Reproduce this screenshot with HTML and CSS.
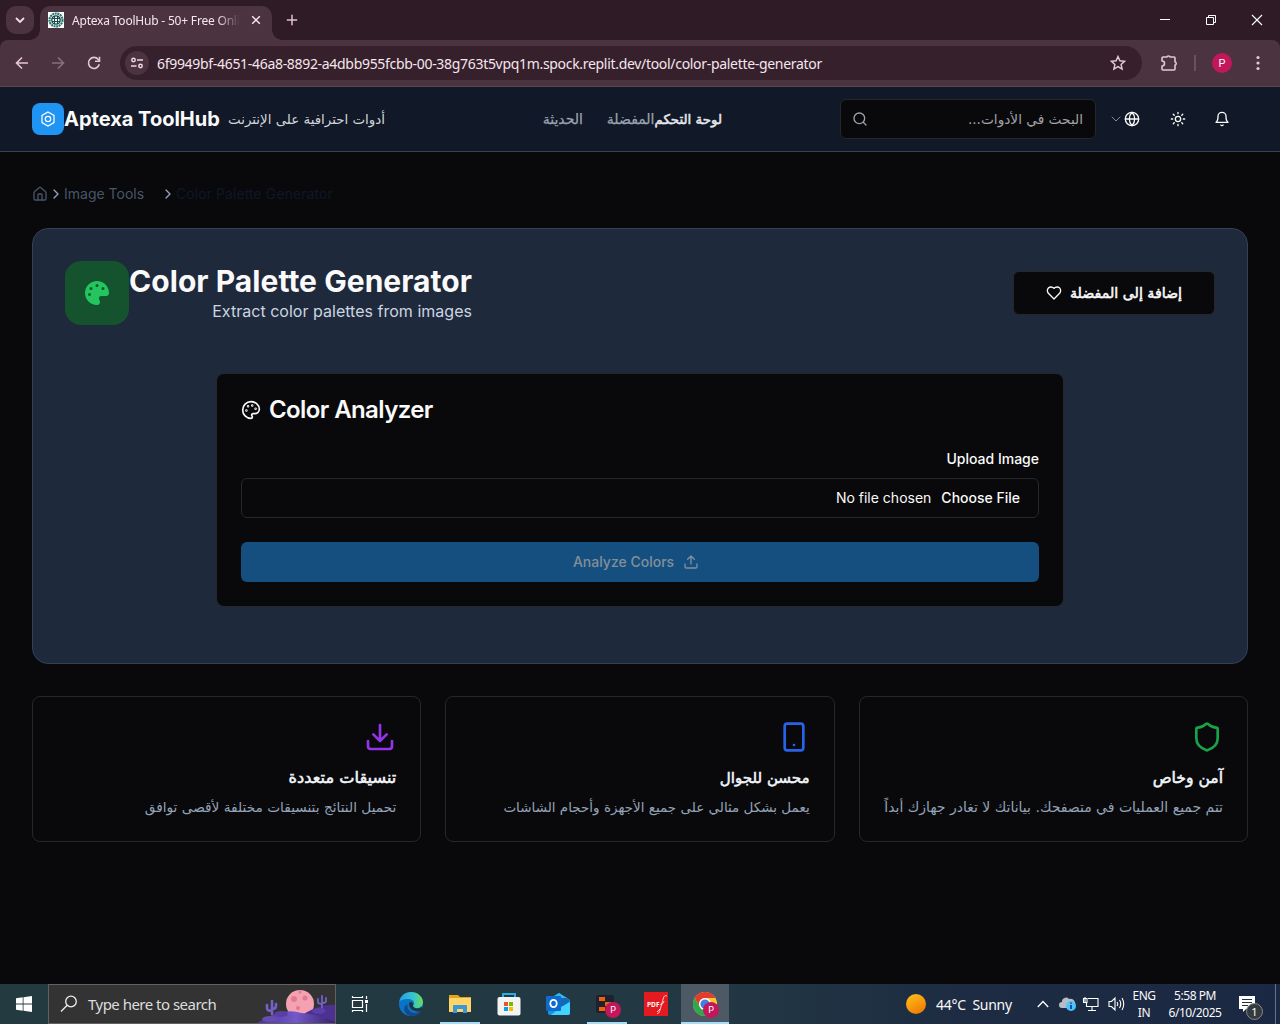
FILE: index.html
```html
<!DOCTYPE html>
<html lang="en">
<head>
<meta charset="utf-8">
<title>Aptexa ToolHub - 50+ Free Online Tools</title>
<link rel="stylesheet" href="styles.css">
</head>
<body>
<div class="tabs">
  <span class="tab-search"><svg width="16" height="16" viewBox="0 0 16 16" fill="none" stroke="#f0dde6" stroke-width="1.8"><path d="M4 6l4 4 4-4"/></svg></span>
  <div class="tab">
    <svg class="favicon" width="16" height="16" viewBox="0 0 16 16"><path fill="#fff" d="M0 0h16v16H0z"/><g fill="none" stroke="#2a7773"><circle cx="8" cy="8" r="6.500" stroke-width="2.200" stroke-dasharray="2 .6"/><circle cx="8" cy="8" r="4.200" stroke="#123e43" stroke-width="1.300"/><path stroke="#174a4d" d="M4 6.500h8M4 9.500h8M6.500 4v8M9.500 4v8"/></g></svg>
    <span class="tab-title">Aptexa ToolHub - 50+ Free Onli</span>
    <svg width="10" height="10" viewBox="0 0 10 10" stroke="#f5e6ed" stroke-width="1.500"><path d="M1.200 1.200l7.600 7.600M8.800 1.200L1.200 8.800"/></svg>
  </div>
  <svg class="new-tab" width="12" height="12" viewBox="0 0 12 12" stroke="#dfc0ce" stroke-width="1.500"><path d="M6 .8v10.400M.8 6h10.400"/></svg>
  <div class="window-buttons">
    <svg width="12" height="12" viewBox="0 0 12 12" stroke="#fff"><path d="M1 5.500h10"/></svg>
    <svg width="12" height="12" viewBox="0 0 12 12" fill="none" stroke="#fff"><path d="M1.500 3.500h7v7h-7zM3.500 3.500v-2h7v7h-2"/></svg>
    <svg width="12" height="12" viewBox="0 0 12 12" stroke="#fff" stroke-width="1.100"><path d="M1 1l10 10M11 1L1 11"/></svg>
  </div>
</div>
<div class="toolbar-wrap">
<div class="toolbar">
  <svg class="tool" width="16" height="16" viewBox="0 0 16 16" fill="none" stroke="#e6c6d4" stroke-width="1.600"><path d="M14 8H3M8 2.500L2.500 8 8 13.500"/></svg>
  <svg class="tool" width="16" height="16" viewBox="0 0 16 16" fill="none" stroke="#8b6f7c" stroke-width="1.600"><path d="M2 8h11M8 2.500L13.500 8 8 13.500"/></svg>
  <svg class="tool" width="16" height="16" viewBox="0 0 16 16" fill="none" stroke="#e6c6d4" stroke-width="1.600"><path d="M13.300 9.300A5.500 5.500 0 1 1 12.300 4.500L13.500 5.800"/><path d="M13.500 1.800v4.500H9"/></svg>
  <div class="address">
    <span class="site-info"><svg width="14" height="14" viewBox="0 0 14 14" fill="none" stroke="#efd5e0" stroke-width="1.500"><circle cx="3.500" cy="4" r="1.700"/><path d="M7 4h6M1 10h5.500"/><circle cx="10.500" cy="10" r="1.700"/></svg></span>
    <span class="url">6f9949bf-4651-46a8-8892-a4dbb955fcbb-00-38g763t5vpq1m.spock.replit.dev/tool/color-palette-generator</span>
    <svg class="star" width="16" height="16" viewBox="0 0 16 16" fill="none" stroke="#e6cdd7" stroke-width="1.400"><path d="M8 1.500l1.900 4.300 4.700.5-3.500 3.100 1 4.600L8 11.600 3.900 14l1-4.600L1.400 6.300l4.700-.5z"/></svg>
  </div>
  <svg class="puzzle" width="18" height="18" viewBox="0 0 18 18" fill="none" stroke="#e6c6d4" stroke-width="1.600"><path d="M3 3h4q0-1 1.500-1T10 3h4q1 0 1 1v4q1.200 0 1.200 1.500T15 11v4q0 1-1 1H3q-1 0-1-1v-3a2.500 2.500 0 0 0 0-5V4q0-1 1-1z" stroke-linejoin="round"/></svg>
  <span class="divider"></span>
  <span class="profile">P</span>
  <svg width="4" height="16" viewBox="0 0 4 16" fill="#e6c6d4"><circle cx="2" cy="2.500" r="1.600"/><circle cx="2" cy="8" r="1.600"/><circle cx="2" cy="13.500" r="1.600"/></svg>
</div>
</div>

<header class="site-header">
  <span class="logo"><svg width="16" height="16" viewBox="0 0 16 16" fill="none" stroke="#fff" stroke-width="1.200"><path d="M8 1l6 3.400v7.200L8 15l-6-3.400V4.400z"/><circle cx="8" cy="8" r="2.700"/></svg></span>
  <span class="brand">Aptexa ToolHub</span>
  <span class="tagline ar" dir="rtl">أدوات احترافية على الإنترنت</span>
  <nav class="nav ar" dir="rtl"><b>لوحة التحكم</b><span>المفضلة</span><span class="recent">الحديثة</span></nav>
  <div class="search ar">
    <svg class="lucide" width="16" height="16" viewBox="0 0 24 24"><circle cx="11" cy="11" r="8"/><path d="m21 21-4.300-4.300"/></svg>
    <span dir="rtl">البحث في الأدوات...</span>
  </div>
  <svg class="lucide chevron" width="12" height="12" viewBox="0 0 24 24"><path d="m4 8 8 8 8-8"/></svg>
  <svg class="lucide" width="16" height="16" viewBox="0 0 24 24"><circle cx="12" cy="12" r="10"/><path d="M12 2a14.500 14.500 0 0 0 0 20 14.500 14.500 0 0 0 0-20M2 12h20"/></svg>
  <svg class="lucide sun" width="16" height="16" viewBox="0 0 24 24"><circle cx="12" cy="12" r="4"/><path d="M12 2v2M12 20v2M4.930 4.930l1.410 1.410M17.660 17.660l1.410 1.410M2 12h2M20 12h2M6.340 17.660l-1.410 1.410M19.070 4.930l-1.410 1.410"/></svg>
  <svg class="lucide bell" width="16" height="16" viewBox="0 0 24 24"><path d="M10.300 21a1.940 1.940 0 0 0 3.400 0M6 8a6 6 0 0 1 12 0c0 7 3 9 3 9H3s3-2 3-9"/></svg>
</header>

<main class="page">
  <div class="crumbs">
    <svg class="lucide home" width="16" height="16" viewBox="0 0 24 24"><path d="M15 21v-8a1 1 0 0 0-1-1h-4a1 1 0 0 0-1 1v8"/><path d="M3 10a2 2 0 0 1 .709-1.528l7-5.999a2 2 0 0 1 2.582 0l7 5.999A2 2 0 0 1 21 10v9a2 2 0 0 1-2 2H5a2 2 0 0 1-2-2z"/></svg>
    <svg class="lucide sep" width="16" height="16" viewBox="0 0 24 24"><path d="m9 18 6-6-6-6"/></svg>
    <span class="parent">Image Tools</span>
    <svg class="lucide sep" width="16" height="16" viewBox="0 0 24 24"><path d="m9 18 6-6-6-6"/></svg>
    <span class="current">Color Palette Generator</span>
  </div>

  <section class="panel">
    <div class="panel-head">
      <span class="tool-icon"><svg width="24" height="24" viewBox="0 0 512 512"><path fill="#22c55e" d="M512 256c0 .9 0 1.800 0 2.700-.4 36.500-33.600 61.300-70.100 61.300H344c-26.500 0-48 21.500-48 48 0 3.400 .4 6.700 1 9.900 2.100 10.200 6.500 20 10.800 29.900 6.100 13.800 12.100 27.500 12.100 42 0 31.800-21.600 60.700-53.400 62-3.500 .1-7 .2-10.600 .2C114.600 512 0 397.400 0 256S114.600 0 256 0 512 114.600 512 256zM128 288a32 32 0 1 0-64 0 32 32 0 1 0 64 0zm0-96a32 32 0 1 0 0-64 32 32 0 1 0 0 64zM288 96a32 32 0 1 0-64 0 32 32 0 1 0 64 0zm96 96a32 32 0 1 0 0-64 32 32 0 1 0 0 64z"/></svg></span>
      <div class="titles"><h1>Color Palette Generator</h1><p>Extract color palettes from images</p></div>
      <div class="favorite"><svg class="lucide" width="16" height="16" viewBox="0 0 24 24"><path d="M19 14c1.490-1.460 3-3.210 3-5.500A5.500 5.500 0 0 0 16.500 3c-1.760 0-3 .5-4.500 2-1.500-1.500-2.740-2-4.500-2A5.500 5.500 0 0 0 2 8.500c0 2.300 1.500 4.050 3 5.500l7 7Z"/></svg><b class="ar" dir="rtl">إضافة إلى المفضلة</b></div>
    </div>
    <div class="analyzer">
      <h2><svg class="lucide" width="20" height="20" viewBox="0 0 24 24"><circle cx="13.500" cy="6.500" r=".5"/><circle cx="17.500" cy="10.500" r=".5"/><circle cx="8.500" cy="7.500" r=".5"/><circle cx="6.500" cy="12.500" r=".5"/><path d="M12 2C6.500 2 2 6.500 2 12s4.500 10 10 10c.926 0 1.648-.746 1.648-1.688 0-.437-.18-.835-.437-1.125-.29-.289-.438-.652-.438-1.125a1.640 1.640 0 0 1 1.668-1.668h1.996c3.051 0 5.555-2.503 5.555-5.554C21.965 6.012 17.461 2 12 2z"/></svg><span>Color Analyzer</span></h2>
      <div class="label">Upload Image</div>
      <div class="file"><span>No file chosen</span><b>Choose File</b></div>
      <div class="submit"><span>Analyze Colors</span><svg class="lucide" width="16" height="16" viewBox="0 0 24 24"><path d="M21 15v4a2 2 0 0 1-2 2H5a2 2 0 0 1-2-2v-4M17 8l-5-5-5 5M12 3v12"/></svg></div>
    </div>
  </section>

  <section class="features" dir="rtl">
    <article class="card secure ar">
      <svg class="lucide green" width="32" height="32" viewBox="0 0 24 24"><path d="M20 13c0 5-3.500 7.500-7.660 8.950a1 1 0 0 1-.67-.01C7.500 20.500 4 18 4 13V6a1 1 0 0 1 1-1c2 0 4.500-1.200 6.240-2.720a1.170 1.170 0 0 1 1.520 0C14.510 3.810 17 5 19 5a1 1 0 0 1 1 1z"/></svg>
      <h3>آمن وخاص</h3><p>تتم جميع العمليات في متصفحك. بياناتك لا تغادر جهازك أبداً</p>
    </article>
    <article class="card mobile ar">
      <svg class="lucide blue" width="32" height="32" viewBox="0 0 24 24"><rect width="14" height="20" x="5" y="2" rx="2"/><path d="M12 18h.010"/></svg>
      <h3>محسن للجوال</h3><p>يعمل بشكل مثالي على جميع الأجهزة وأحجام الشاشات</p>
    </article>
    <article class="card formats ar">
      <svg class="lucide purple" width="32" height="32" viewBox="0 0 24 24"><path d="M21 15v4a2 2 0 0 1-2 2H5a2 2 0 0 1-2-2v-4M7 10l5 5 5-5M12 15V3"/></svg>
      <h3>تنسيقات متعددة</h3><p>تحميل النتائج بتنسيقات مختلفة لأقصى توافق</p>
    </article>
  </section>
</main>

<footer class="taskbar">
  <span class="start"><svg width="16" height="16" viewBox="0 0 16 16" fill="#fff"><path d="M0 2.300l6.700-1v6.300H0zM7.500 1.200L16 0v7.600H7.500zM0 8.400h6.700v6.300L0 13.700zM7.500 8.400H16V16l-8.500-1.200z"/></svg></span>
  <div class="win-search">
    <svg width="18" height="18" viewBox="0 0 18 18" fill="none" stroke="#eee" stroke-width="1.300"><circle cx="11" cy="6.500" r="5.300"/><path d="M7.200 10.300L1 16.500"/></svg>
    <span>Type here to search</span>
    <svg class="scene" width="80" height="38" viewBox="0 0 80 38"><defs><linearGradient id="hill"><stop offset="0" stop-color="#4e329f"/><stop offset=".5" stop-color="#7259c8"/><stop offset="1" stop-color="#38216f"/></linearGradient></defs><circle cx="45" cy="19" r="14" fill="#f5a1b2"/><g fill="#da7e90"><circle cx="39" cy="14" r="3"/><circle cx="50" cy="13" r="2.500"/><circle cx="45" cy="7" r="1.500"/><circle cx="43" cy="23" r="2"/></g><path d="M37 38Q60 18 80 20v18z" fill="#4c3192"/><path d="M2 38Q28 22 46 28q20 2 34 9v1z" fill="url(#hill)"/><g fill="none" stroke="#7560c6" stroke-width="2.600" stroke-linecap="round"><path d="M17 29V16M12 20v3q0 3 5 3M21 19v2q0 3-4 3"/><path d="M67 23V11M63 14v3q0 2 4 2M71 13v3q0 2-4 2" stroke-width="1.800"/></g><ellipse cx="26" cy="29" rx="7" ry="3" fill="#5840a1"/><ellipse cx="15" cy="34" rx="8" ry="3" fill="#694cb2"/><ellipse cx="64" cy="26" rx="7" ry="3" fill="#5a3fa4"/></svg>
  </div>
  <span class="app task-view"><svg width="18" height="18" viewBox="0 0 18 18" fill="none" stroke="#fff" stroke-width="1.200"><path d="M1.500 5.500h10v7h-10zM1.500 1v1.500h10V1M1.500 17v-1.500h10V17M15.500 1v3M15.500 9v8"/><path d="M14 5h3v3h-3z" fill="#fff" stroke="none"/></svg></span>
  <span class="app"><svg width="24" height="24" viewBox="0 0 24 24"><defs><linearGradient id="edge"><stop stop-color="#249fe5"/><stop offset=".6" stop-color="#37c5cb"/><stop offset="1" stop-color="#6adb55"/></linearGradient></defs><circle cx="12" cy="12" r="12" fill="#0b74c9"/><path d="M.3 10C1 4 6 0 12 0c7 0 12 5 12 10 0 4-3 6-6.500 6-2.500 0-4.500-1-3.500-2.500 3-4-1-6.500-5-6.500C5 7 1 8 .3 10z" fill="url(#edge)"/><path d="M8.500 12c-1 5 3 9 7.500 9 3 0 5.500-2 6.500-3C19 25 12 25 9 23c-5-3-5-9-.5-11z" fill="#114b8c"/><path d="M10 12c0-2 2-3 4-1 1 1 0 2 0 3 1 3 6 3 9 1l1 2c-2 3-5 3-8 2-4-1-6-4-6-7z" fill="#20373f"/></svg></span>
  <span class="app active"><svg width="22" height="22" viewBox="0 0 22 22"><path d="M0 2h9l2 2h11v15H0z" fill="#e6a41d"/><path d="M0 5h22v14H0z" fill="#ffd567"/><path d="M4 20v-7q0-1 1-1h12q1 0 1 1v7h-4v-4H8v4z" fill="#3a98d9"/></svg></span>
  <span class="app"><svg width="24" height="24" viewBox="0 0 24 24"><path d="M6 7V2h12v5" fill="none" stroke="#24afe5" stroke-width="2"/><rect y="5" x=".5" width="23" height="18.500" rx="2" fill="#f3f3f3"/><path fill="#f15124" d="M7 10h4v4H7z"/><path fill="#7eba00" d="M12 10h4v4h-4z"/><path fill="#00a2ed" d="M7 15h4v4H7z"/><path fill="#ffb900" d="M12 15h4v4h-4z"/></svg></span>
  <span class="app"><svg width="24" height="24" viewBox="0 0 24 24"><path d="M2 8L13 1l11 7v13q0 2-2 2H4q-2 0-2-2z" fill="#1495e3"/><path d="M8 4l5-3 8 5-9 9z" fill="#35b6ef"/><path d="M14 6h6l4 3-10 8z" fill="#1268b7"/><path d="M15 15l9-5v11q0 2-2 2H5z" fill="#42d3ff"/><rect y="4" width="15" height="15" rx="1" fill="#0d6ccb"/><ellipse cx="7.500" cy="11.500" rx="3.200" ry="3.600" fill="none" stroke="#fff" stroke-width="1.800"/></svg></span>
  <span class="app active whole"><svg width="24" height="24" viewBox="0 0 24 24"><rect x="1" y="3" width="18" height="18" rx="2" fill="#1e2131"/><path fill="#f26207" d="M4 5h6v4H4zM10 10h6v4h-6zM4 15h6v4H4z"/></svg><i class="badge">P</i></span>
  <span class="app"><span class="pdf">PDF<svg width="12" height="24" viewBox="0 0 12 24" fill="none" stroke="#fff" stroke-width=".8"><path d="M1 21c2 2 3-3 5-10S8 3 11 4M4 13c2-2 3 0 4-4M1 20l3-3"/></svg></span></span>
  <span class="app current-app"><svg width="24" height="24" viewBox="0 0 24 24"><circle cx="12" cy="12" r="12" fill="#fcc934"/><path d="M1.600 6A12 12 0 0 1 22.400 6H12a6 6 0 0 0-5.200 9z" fill="#e33b2e"/><path d="M1.600 6A12 12 0 0 0 12 24l5.200-9A6 6 0 0 1 6.800 15z" fill="#2da94f"/><circle cx="12" cy="12" r="6" fill="#fff"/><circle cx="12" cy="12" r="4.600" fill="#3f7de8"/></svg><i class="badge">P</i></span>
  <div class="tray">
    <span class="sun-disc"></span><span class="weather">44°C&nbsp; Sunny</span>
    <svg class="up" width="12" height="8" viewBox="0 0 12 8" fill="none" stroke="#fff" stroke-width="1.300"><path d="M.8 7L6 1.500 11.200 7"/></svg>
    <svg class="cloud" width="18" height="16" viewBox="0 0 18 16"><path d="M3 12a3 3 0 0 1 0-6 4 4 0 0 1 7-3 5 5 0 0 1 4 9z" fill="#b8bdc4"/><circle cx="12" cy="10" r="5" fill="#4cc2ff"/><path d="M12 9v4M12 6.500v1.200" stroke="#073b69" stroke-width="1.600"/></svg>
    <svg class="net" width="17" height="16" viewBox="0 0 17 16" fill="none" stroke="#fff" stroke-width="1.100"><path d="M6 2.500h10v8H4.500V7M10 10.500v4M6 14.500h8M1.500 2.500H5v4H1.500zM3 1v5"/></svg>
    <svg class="vol" width="17" height="16" viewBox="0 0 17 16" fill="none" stroke="#fff" stroke-width="1.100"><path d="M1 5.500h2.500L7 2v12l-3.500-3.500H1zM9 6q1.500 2 0 4M11.500 4q2.500 4 0 8M14 2q3.500 6 0 12"/></svg>
    <span class="lang">ENG<br>IN</span>
    <span class="clock">5:58 PM<br>6/10/2025</span>
    <span class="notes"><svg width="17" height="17" viewBox="0 0 17 17"><path d="M0 0h16v13H7l-3 3v-3H0z" fill="#fff"/><path d="M3 3.500h10M3 6.500h10M3 9.500h6" stroke="#203040"/></svg><i>1</i></span>
    <span class="desktop-edge"></span>
  </div>
</footer>
</body>
</html>
```
FILE: styles.css
```css
* { box-sizing: border-box; }
html, body { height: 1024px; }
body { margin: 0; width: 1280px; overflow: hidden; background: #09090b; color: #fafafa; font-family: Inter, sans-serif; display: flex; flex-direction: column; }
svg { display: block; flex: none; }
h1, h2, h3, p { margin: 0; }
.ar { font-family: "DejaVu Sans", sans-serif; white-space: nowrap; }
.ar h3, .ar b, b.ar { font-weight: 400; -webkit-text-stroke: .55px currentColor; }
.lucide { fill: none; stroke: currentColor; stroke-width: 2; stroke-linecap: round; stroke-linejoin: round; }

/* Browser frame */
.tabs { height: 40px; background: #2f1b26; display: flex; align-items: center; padding-left: 6px; font-family: "Noto Sans", sans-serif; }
.tab-search { width: 28px; height: 28px; border-radius: 10px; background: #4b3440; display: grid; place-items: center; }
.tab { position: relative; margin-left: 6px; align-self: flex-end; width: 232px; height: 34px; border-radius: 10px 10px 0 0; background: #4b3440; display: flex; align-items: center; padding: 0 11px 6px 8px; }
.tab::before, .tab::after { content: ""; position: absolute; bottom: 0; width: 10px; height: 10px; }
.tab::before { left: -10px; background: radial-gradient(circle at 0 0, transparent 9.5px, #4b3440 10px); }
.tab::after { right: -10px; background: radial-gradient(circle at 100% 0, transparent 9.5px, #4b3440 10px); }
.tab-title { width: 168px; margin: 1px 11px 0 8px; font-size: 12px; letter-spacing: -.2px; color: #f5e6ed; white-space: nowrap; mask-image: linear-gradient(90deg, #000 145px, transparent 168px); }
.new-tab { margin-left: 14px; }
.window-buttons { margin-left: auto; display: flex; gap: 34px; padding-right: 17px; }
.toolbar-wrap { height: 47px; background: #2f1b26; }
.toolbar { height: 47px; background: #4b3440; border-bottom: 1px solid #5b4650; border-radius: 8px 8px 0 0; display: flex; align-items: center; padding: 0 20px 0 14px; }
.tool { margin-right: 20px; }
.address { width: 1022px; height: 34px; border-radius: 17px; background: #35202b; display: flex; align-items: center; padding: 0 16px 0 5px; margin-left: -2px; }
.site-info { width: 24px; height: 24px; border-radius: 50%; background: #4b3440; display: grid; place-items: center; }
.url { margin-left: 8px; font: 14px "Noto Sans", sans-serif; letter-spacing: -.31px; white-space: nowrap; color: #f5e6ed; }
.star { margin-left: auto; }
.puzzle { margin-left: 18px; }
.divider { width: 2px; height: 16px; margin-left: 16px; background: #6c505e; }
.profile { width: 20px; height: 20px; border-radius: 50%; margin: 0 24px 0 16px; background: #c2185b; display: grid; place-items: center; font: 11px Roboto, sans-serif; }

/* Site header */
.site-header { height: 65px; background: #111827; border-bottom: 1px solid #334155; display: flex; align-items: center; padding: 0 32px; flex: none; }
.logo { width: 32px; height: 32px; border-radius: 8px; background: #2094f3; display: grid; place-items: center; }
.brand { width: 156px; margin-right: 8px; font-size: 20px; font-weight: 700; white-space: nowrap; }
.tagline { width: 157px; font-size: 13.4px; color: #d1d5db; }
.nav { width: 180px; margin-left: 157px; display: flex; align-items: baseline; font-size: 14px; color: #9ca3af; -webkit-text-stroke: .25px currentColor; }
.nav b { font-size: 13.4px; color: #e5e7eb; }
.recent { margin-right: 24px; }
.search { width: 256px; height: 40px; margin-left: 118px; border: 1px solid #27272a; border-radius: 6px; background: #09090b; color: #a1a1aa; display: flex; align-items: center; justify-content: space-between; padding: 0 12px 0 11px; font-size: 13.7px; }
.search svg { color: #9ca3af; }
.chevron { margin: 0 2px 0 14px; color: #858b96; }
.sun { margin-left: 30px; }
.bell { margin-left: 28px; }

/* Tool page */
.page { height: 832px; padding: 32px; flex: none; }
.crumbs { height: 20px; display: flex; align-items: center; font-size: 14px; line-height: 20px; white-space: nowrap; color: #475569; }
.crumbs span { padding-bottom: 1px; }
.sep { color: #94a3b8; }
.parent { width: 80px; margin-right: 16px; }
.current { color: #0f172a; letter-spacing: .08px; }
.panel { height: 436px; margin-top: 24px; border: 1px solid #334155; border-radius: 16px; background: #1e293b; padding: 32px; }
.panel-head { display: flex; align-items: center; height: 64px; }
.tool-icon { width: 64px; height: 64px; border-radius: 16px; background: #14532d; display: grid; place-items: center; }
.titles { width: 343px; text-align: right; white-space: nowrap; }
h1 { font-size: 30px; line-height: 36px; font-weight: 700; letter-spacing: .04px; }
.titles p { color: #cbd5e1; font-size: 16px; line-height: 24px; letter-spacing: .02px; }
.favorite { margin-left: auto; width: 202px; height: 44px; border: 1px solid #27272a; border-radius: 6px; background: #09090b; display: flex; align-items: center; justify-content: center; gap: 8px; font-size: 14.2px; }
.analyzer { width: 848px; height: 234px; margin: 48px auto 0; border: 1px solid #27272a; border-radius: 8px; background: #09090b; padding: 24px; }
h2 { height: 24px; display: flex; align-items: center; gap: 8px; font-size: 24px; line-height: 24px; font-weight: 600; letter-spacing: -.6px; }
.label { margin-top: 27px; text-align: right; font-size: 14px; line-height: 20px; font-weight: 500; }
.file { height: 40px; margin-top: 9px; padding: 0 18px 1px 0; border: 1px solid #27272a; border-radius: 6px; display: flex; align-items: center; justify-content: flex-end; gap: 10px; font-size: 14px; }
.file b { font-weight: 500; }
.submit { height: 40px; margin-top: 24px; padding-right: 8px; border-radius: 6px; background: #154f7f; color: #828f9a; display: flex; align-items: center; justify-content: center; gap: 9px; font-size: 14px; font-weight: 500; }
.submit span { padding-bottom: 1px; }
.features { margin-top: 32px; display: grid; grid-template-columns: repeat(3, 1fr); gap: 24px; }
.card { height: 146px; border: 1px solid #27272a; border-radius: 8px; padding: 24px; }
.card h3 { margin-top: 13px; font-size: 15.6px; line-height: 24px; color: #f1f5f9; }
.card p { margin-top: 7px; font-size: 13.7px; line-height: 20px; color: #94a3b8; }
.secure p { font-size: 14px; }
.mobile p { font-size: 13.5px; }
.mobile h3 { font-size: 15.1px; }
.formats h3 { font-size: 16.2px; }
.green { color: #16a34a; }
.blue { color: #2563eb; }
.purple { color: #9333ea; }

/* Windows taskbar */
.taskbar { height: 40px; flex: none; display: flex; align-items: center; background: linear-gradient(90deg, #223a40, #223843 55%, #1d2c42 75%, #1b2843); font-family: "Noto Sans", sans-serif; }
.start { width: 48px; display: grid; place-items: center; }
.win-search { width: 288px; height: 40px; border: 1px solid #626262; background: #333; display: flex; align-items: center; padding-left: 11px; font-size: 15px; color: #ddd; }
.win-search span { margin-left: 10px; width: 128px; white-space: nowrap; letter-spacing: -.52px; }
.scene { margin-left: auto; }
.app { position: relative; width: 40px; height: 40px; margin-left: 9px; display: grid; place-items: center; }
.task-view { margin: 0 2px 0 4px; }
.active { border-bottom: 2px solid #a7dcf6; padding-top: 2px; }
.badge { position: absolute; left: 18px; top: 18px; width: 16px; height: 16px; border-radius: 50%; background: #c2185b; color: #fff; display: grid; place-items: center; font: 9px Roboto, sans-serif; }
.pdf { position: relative; width: 24px; height: 24px; background: #e51920; display: flex; align-items: center; padding-left: 3px; font: bold 6.5px "Open Sans", sans-serif; }
.pdf svg { position: absolute; right: 0; top: 0; }
.current-app { width: 48px; margin-left: 5px; background: #4d5a65; border-bottom: 2px solid #a7dcf6; padding-top: 2px; }
.current-app .badge { left: 22px; }
.tray { margin-left: auto; display: flex; align-items: center; height: 40px; font-size: 12px; }
.sun-disc { width: 20px; height: 20px; border-radius: 50%; background: linear-gradient(150deg, #ffc31c, #ef7100); }
.weather { width: 77px; margin-left: 10px; font-size: 14px; letter-spacing: -.28px; white-space: nowrap; }
.up { margin-left: 24px; }
.cloud { margin-left: 10px; }
.net { margin-left: 5px; }
.vol { margin-left: 9px; }
.lang, .clock { text-align: center; line-height: 17px; letter-spacing: -.45px; padding-bottom: 1px; }
.lang { width: 26px; margin-left: 6px; }
.clock { width: 56px; margin-left: 10px; }
.notes { position: relative; margin-left: 16px; }
.notes i { position: absolute; left: 7px; top: 7px; width: 17px; height: 17px; border-radius: 50%; border: 1px solid #888; background: #333b40; display: grid; place-items: center; font: 11px "Noto Sans", sans-serif; }
.desktop-edge { width: 1px; height: 40px; margin: 0 4px 0 19px; background: #687485; }
```
